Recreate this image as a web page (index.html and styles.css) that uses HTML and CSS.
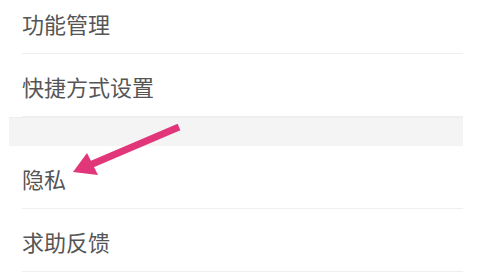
FILE: index.html
```html
<!DOCTYPE html>
<html lang="zh-CN">
<head>
<meta charset="utf-8">
<title>设置</title>
<link rel="stylesheet" href="styles.css">
</head>
<body>
<div class="page">
  <div class="list">
    <div class="group">
      <div class="row"><span class="label">功能管理</span></div>
      <div class="row"><span class="label">快捷方式设置</span></div>
    </div>
    <div class="gap"></div>
    <div class="group">
      <div class="row"><span class="label">隐私</span></div>
      <div class="row"><span class="label">求助反馈</span></div>
    </div>
  </div>
  <svg class="arrow" width="479" height="272" viewBox="0 0 479 272">
    <line x1="179" y1="127" x2="90" y2="165" stroke="#e2367a" stroke-width="7" stroke-linecap="butt"/>
    <polygon points="73,172 87,153 98,175" fill="#e2367a"/>
  </svg>
</div>
</body>
</html>
```
FILE: styles.css
```css
html, body {
  margin: 0;
  padding: 0;
  background: #ffffff;
}
.page {
  position: relative;
  width: 479px;
  height: 272px;
  overflow: hidden;
  font-family: "Noto Sans CJK SC", "Noto Sans", sans-serif;
}
.list {
  margin-left: 9px;
  width: 454px;
  margin-top: -9px;
  display: flex;
  flex-direction: column;
}
.group {
  display: flex;
  flex-direction: column;
  padding-left: 13px;
  background: #ffffff;
}
.row {
  height: 62px;
  display: flex;
  align-items: center;
  border-bottom: 1px solid #efefef;
}
.label {
  font-size: 22px;
  color: #555555;
  line-height: 1;
  position: relative;
  top: 1px;
}
.gap {
  height: 29px;
  background: #f4f4f4;
  border-top: 1px solid #eeeeee;
  box-sizing: border-box;
}
.arrow {
  position: absolute;
  left: 0;
  top: 0;
  pointer-events: none;
}
```
